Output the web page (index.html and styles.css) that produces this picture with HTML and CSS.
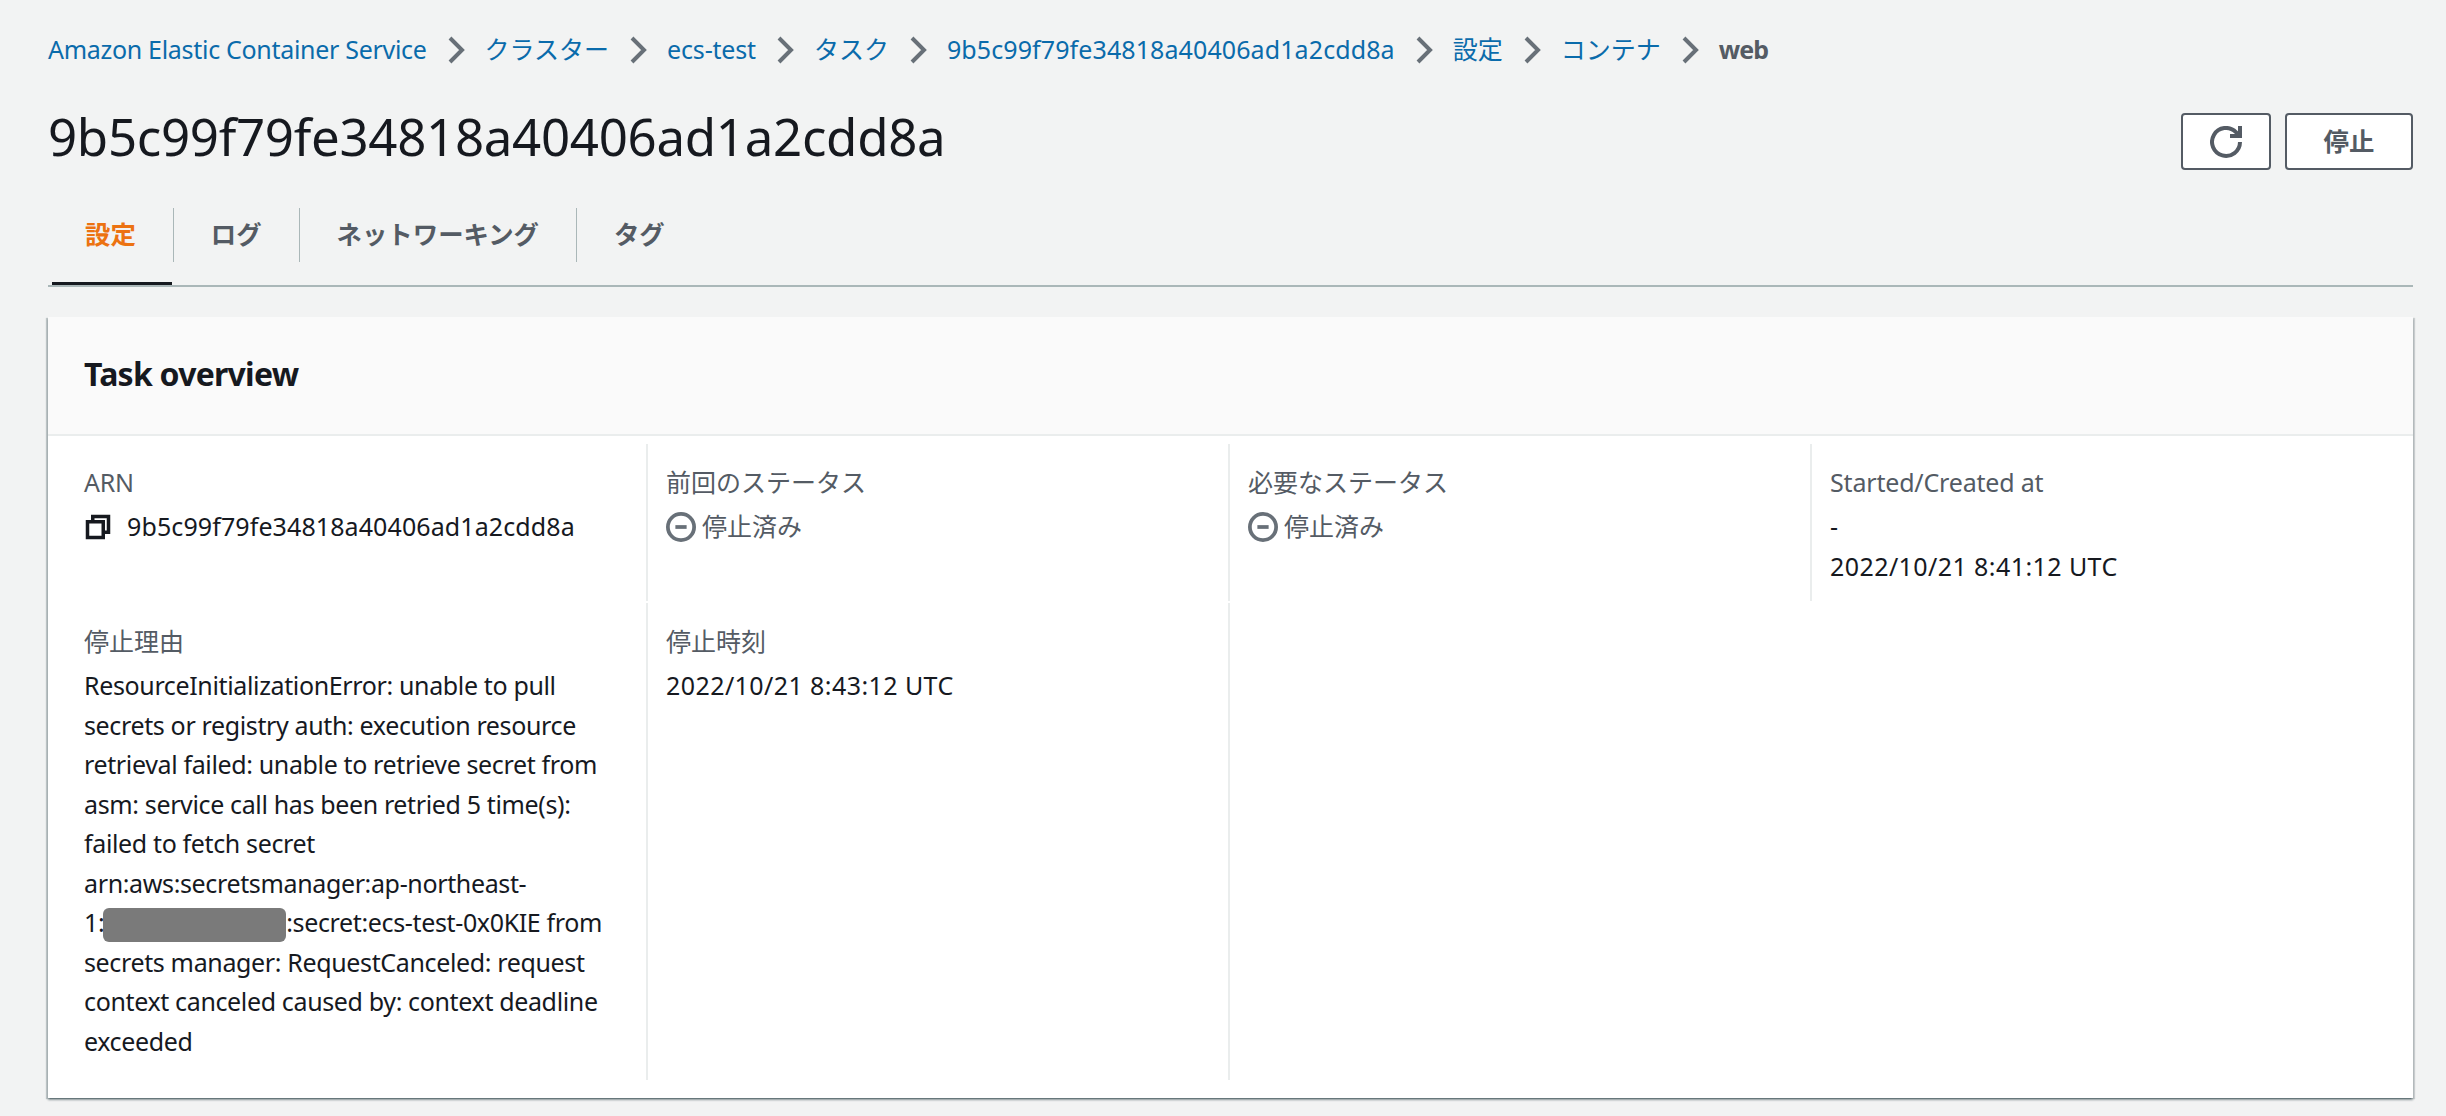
FILE: index.html
```html
<!DOCTYPE html>
<html lang="ja">
<head>
<meta charset="utf-8">
<title>9b5c99f79fe34818a40406ad1a2cdd8a</title>
<link rel="stylesheet" href="styles.css">
</head>
<body>
<nav class="crumbs">
  <a class="crumb latin">Amazon Elastic Container Service</a>
  <svg class="chev" viewBox="0 0 18 28"><path d="M3 2l12 12L3 26"/></svg>
  <a class="crumb">クラスター</a>
  <svg class="chev" viewBox="0 0 18 28"><path d="M3 2l12 12L3 26"/></svg>
  <a class="crumb latin-short">ecs-test</a>
  <svg class="chev" viewBox="0 0 18 28"><path d="M3 2l12 12L3 26"/></svg>
  <a class="crumb">タスク</a>
  <svg class="chev" viewBox="0 0 18 28"><path d="M3 2l12 12L3 26"/></svg>
  <a class="crumb hash">9b5c99f79fe34818a40406ad1a2cdd8a</a>
  <svg class="chev" viewBox="0 0 18 28"><path d="M3 2l12 12L3 26"/></svg>
  <a class="crumb">設定</a>
  <svg class="chev" viewBox="0 0 18 28"><path d="M3 2l12 12L3 26"/></svg>
  <a class="crumb">コンテナ</a>
  <svg class="chev" viewBox="0 0 18 28"><path d="M3 2l12 12L3 26"/></svg>
  <span class="crumb current">web</span>
</nav>
<header class="title-row">
  <h1 class="title">9b5c99f79fe34818a40406ad1a2cdd8a</h1>
  <div class="actions">
    <button class="btn btn-icon"><svg class="icon-refresh" viewBox="0 0 16 16"><path d="M10 5h5V0"/><path d="M15 8a6.99 6.99 0 1 1-2.04-4.96L15 5"/></svg></button>
    <button class="btn btn-text">停止</button>
  </div>
</header>
<div class="tabs">
  <div class="tab active">設定</div>
  <div class="tab">ログ</div>
  <div class="tab">ネットワーキング</div>
  <div class="tab last">タグ</div>
</div>
<section class="panel">
  <h2 class="panel-head">Task overview</h2>
  <div class="grid">
    <div class="cell first">
      <div class="label latin">ARN</div>
      <div class="value hash arn"><svg class="icon-copy" viewBox="0 0 16 16"><path d="M2 5h9v9H2z"/><path d="M5 5V2h9v9h-3"/></svg>9b5c99f79fe34818a40406ad1a2cdd8a</div>
    </div>
    <div class="cell">
      <div class="label">前回のステータス</div>
      <div class="status"><svg class="icon-status" viewBox="0 0 16 16"><circle cx="8" cy="8" r="7"/><path d="M5 8h6"/></svg>停止済み</div>
    </div>
    <div class="cell">
      <div class="label">必要なステータス</div>
      <div class="status"><svg class="icon-status" viewBox="0 0 16 16"><circle cx="8" cy="8" r="7"/><path d="M5 8h6"/></svg>停止済み</div>
    </div>
    <div class="cell">
      <div class="label latin-short">Started/Created at</div>
      <div class="value">-</div>
      <div class="value date">2022/10/21 8:41:12 UTC</div>
    </div>
    <div class="cell first">
      <div class="label">停止理由</div>
      <div class="value prose">ResourceInitializationError: unable to pull<br>secrets or registry auth: execution resource<br>retrieval failed: unable to retrieve secret from<br>asm: service call has been retried 5 time(s):<br>failed to fetch secret<br>arn:aws:secretsmanager:ap-northeast-<br>1:<span class="redact"></span>:secret:ecs-test-0x0KIE from<br>secrets manager: RequestCanceled: request<br>context canceled caused by: context deadline<br>exceeded</div>
    </div>
    <div class="cell">
      <div class="label">停止時刻</div>
      <div class="value date">2022/10/21 8:43:12 UTC</div>
    </div>
    <div class="cell"></div>
  </div>
</section>
</body>
</html>
```
FILE: styles.css
```css
* { box-sizing: border-box; }
html, body { margin: 0; height: 100%; }
body {
  background: #f2f3f3;
  color: #16191f;
  font-family: "Noto Sans", "Noto Sans CJK JP", sans-serif;
  font-size: 25px;
  line-height: 39.5px;
  padding: 30px 33px 0 48px;
  overflow: hidden;
}
.latin { letter-spacing: -0.3px; }
.latin-short { letter-spacing: -0.18px; }
.hash { letter-spacing: 0.1px; }
.date { letter-spacing: 0.42px; }
.prose { letter-spacing: -0.36px; }
.crumbs { display: flex; align-items: center; height: 40px; white-space: nowrap; }
.crumb { color: #0a6bab; }
.crumb.current { color: #545b64; font-weight: 700; letter-spacing: -0.9px; }
.chev { width: 18px; height: 28px; margin: 0 20px; flex: none; }
.chev path { fill: none; stroke: #687078; stroke-width: 4; }
.title-row { display: flex; justify-content: space-between; align-items: center; height: 57px; margin-top: 43px; }
.title { margin: 0 0 10px; font-size: 51px; line-height: 57px; font-weight: 400; letter-spacing: -0.3px; white-space: nowrap; }
.actions { display: flex; gap: 14px; }
.btn { height: 57px; background: #fff; border: 2px solid #545b64; border-radius: 4px; padding: 0; display: flex; align-items: center; justify-content: center; font: inherit; font-size: 25.4px; color: #545b64; font-weight: 700; }
.btn-icon { width: 90px; }
.btn-text { width: 128px; }
.icon-refresh { width: 32px; height: 32px; }
.icon-refresh path { fill: none; stroke: #545b64; stroke-width: 2; }
.tabs { display: flex; height: 79px; margin-top: 38px; border-bottom: 2px solid #aab7b8; }
.tab { position: relative; height: 54px; padding: 0 37px; font-size: 25.4px; line-height: 52px; font-weight: 700; color: #545b64; border-right: 1px solid #aab7b8; white-space: nowrap; }
.tab.last { border-right: 0; }
.tab.active { color: #ec7211; }
.tab.active::after { content: ""; position: absolute; left: 4px; right: 1px; top: 74px; height: 3px; background: #16191f; }
.panel { margin-top: 30px; height: 781px; background: #fff; box-shadow: 0 2px 2px 0 rgba(0,28,36,.4), 2px 1px 1px 0 rgba(0,28,36,.15), -2px 1px 1px 0 rgba(0,28,36,.2); }
.panel-head { margin: 0; height: 119px; padding: 0 36px; background: #fafafa; border-bottom: 2px solid #eaeded; font-size: 32px; font-weight: 700; line-height: 114px; letter-spacing: -0.75px; }
.grid { display: grid; grid-template-columns: 598px 582px 582px 1fr; grid-template-rows: 157px 477px; row-gap: 2px; margin-top: 8px; }
.cell { padding: 18px 18px 0 18px; border-left: 2px solid #eaeded; }
.cell.first { padding-left: 36px; border-left: 0; }
.label { color: #545b64; height: 45px; line-height: 40px; }
.value { white-space: nowrap; }
.arn { display: flex; align-items: center; }
.icon-copy { width: 28px; height: 28px; margin-right: 15px; flex: none; }
.icon-copy path { fill: none; stroke: #16191f; stroke-width: 2; }
.status { display: flex; align-items: center; color: #545b64; }
.icon-status { width: 30px; height: 30px; margin-right: 6px; flex: none; }
.icon-status circle, .icon-status path { fill: none; stroke: #687078; stroke-width: 2; }
.redact { display: inline-block; width: 183px; height: 34px; margin-left: -1px; background: #7a7a7a; border-radius: 6px; vertical-align: middle; }
```
